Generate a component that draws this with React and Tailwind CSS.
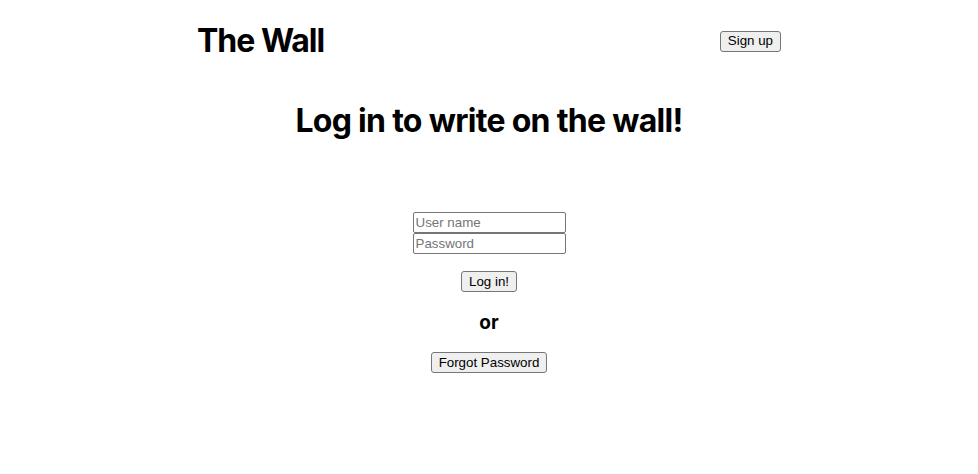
export default function App() {
  const btn =
    "bg-[#efefef] border border-[#767676] rounded-[3px] px-[7px] h-[21px] text-[13.33px] leading-[16px] text-black font-['Liberation_Sans',Arial,sans-serif] hover:bg-[#e5e5e5]";
  const input =
    "block w-[153px] h-[21px] border border-[#767676] rounded-[2px] px-[2px] text-[13.33px] leading-[16px] font-['Liberation_Sans',Arial,sans-serif] placeholder:text-[#757575] bg-white";
  return (
    <div className="min-h-screen bg-white text-black font-['Inter',sans-serif]">
      <div className="w-[584px] mx-auto">
        <header className="flex items-center justify-between h-[82px]">
          <h1 className="text-[32px] leading-[40px] font-bold tracking-[-1px]">The Wall</h1>
          <button className={btn}>Sign up</button>
        </header>
        <h2 className="mt-[19px] text-center text-[32px] leading-[40px] font-bold tracking-[-0.7px]">
          Log in to write on the wall!
        </h2>
        <div className="mt-[71px] flex flex-col items-center">
          <input className={input} placeholder="User name" />
          <input className={input} type="password" placeholder="Password" />
          <button className={btn + " mt-[17px]"}>Log in!</button>
          <h3 className="mt-[19px] text-[19px] leading-[24px] font-bold">or</h3>
          <button className={btn + " mt-[17px]"}>Forgot Password</button>
        </div>
      </div>
    </div>
  );
}
